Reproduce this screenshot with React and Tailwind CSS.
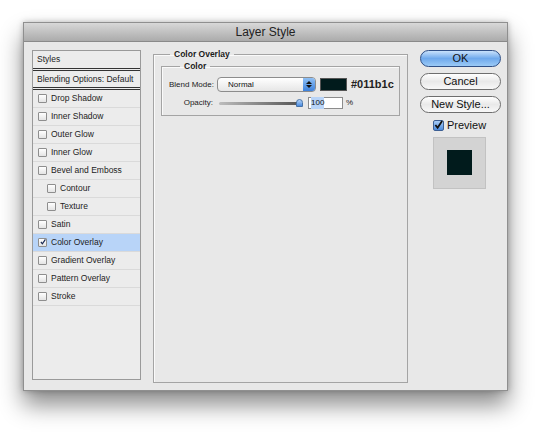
import React from "react";

const font = { fontFamily: '"Liberation Sans", Arial, sans-serif' };

function Box({ checked, indent }) {
  return (
    <span
      className={`inline-flex items-center justify-center w-[9px] h-[9px] border border-[#8e8e8e] bg-gradient-to-b from-white to-[#e4e4e4] rounded-[1px] ${indent ? "ml-[14px]" : "ml-[5px]"} mr-[4px] shrink-0`}
    >
      {checked && (
        <svg width="10" height="10" viewBox="0 0 10 10" className="-mt-[2px] ml-[1px]">
          <path d="M1.5 5 L4 8 L9 0.5" stroke="#1a2a55" strokeWidth="2" fill="none" />
        </svg>
      )}
    </span>
  );
}

const rows = [
  ["Drop Shadow"],
  ["Inner Shadow"],
  ["Outer Glow"],
  ["Inner Glow"],
  ["Bevel and Emboss"],
  ["Contour", true],
  ["Texture", true],
  ["Satin"],
  ["Color Overlay", false, true],
  ["Gradient Overlay"],
  ["Pattern Overlay"],
  ["Stroke"],
];

export default function App() {
  return (
    <div className="w-[550px] h-[436px] bg-white pl-[23px] pt-[22px]" style={font}>
      <div className="w-[485px] h-[369px] flex flex-col border border-[#8f8f8f] bg-[#e8e8e8] shadow-[0_14px_22px_rgba(0,0,0,0.45),0_0_6px_rgba(0,0,0,0.25)]">
        <div className="h-[19px] shrink-0 bg-gradient-to-b from-[#d8d8d8] to-[#ababab] border-b border-[#8a8a8a] flex items-center justify-center text-[12px] text-[#222]">
          Layer Style
        </div>
        <div className="flex flex-1 pl-[8px] pt-[8px]">
          {/* left list */}
          <div className="w-[109px] h-[330px] border border-[#9a9a9a] bg-[#ececec] flex flex-col text-[8.5px] text-[#1c1c1c]">
            <div className="h-[20px] flex items-center pl-[4px] border-b-[3px] border-double border-[#333]">Styles</div>
            <div className="h-[19px] flex items-center pl-[4px] border-b-[3px] border-double border-[#333]">Blending Options: Default</div>
            {rows.map(([label, indent, sel]) => (
              <div
                key={label}
                className={`h-[18px] flex items-center border-b border-[#dadada] ${sel ? "bg-[#b8d4f8]" : ""}`}
              >
                <Box indent={indent} checked={sel} />
                {label}
              </div>
            ))}
          </div>

          {/* main */}
          <div className="ml-[12px] w-[255px] h-[334px]">
            <fieldset className="h-full border border-[#a4a4a4] shadow-[inset_1px_1px_0_#fafafa] px-[7px] pb-0 -mt-[1px]">
              <legend className="ml-[9px] px-[4px] text-[8.5px] font-bold text-[#1c1c1c] leading-[10px]">Color Overlay</legend>
              <fieldset className="mt-[2px] h-[55px] border border-[#a4a4a4] shadow-[inset_1px_1px_0_#fafafa] pl-[7px]">
                <legend className="ml-[11px] px-[4px] text-[8.5px] font-bold text-[#1c1c1c] leading-[10px]">Color</legend>
                <div className="flex items-center mt-[6px] h-[15px]">
                  <span className="text-[8px] text-[#222] w-[48px]">Blend Mode:</span>
                  <div className="w-[99px] h-[15px] rounded-[4px] border border-[#8c8c8c] bg-gradient-to-b from-white to-[#e6e6e6] flex items-center text-[8px] text-[#111] pl-[10px] relative overflow-hidden">
                    Normal
                    <div className="absolute right-0 top-0 bottom-0 w-[12px] bg-gradient-to-b from-[#8fc0f5] to-[#3d82dc] flex flex-col items-center justify-center gap-[1px]">
                      <svg width="6" height="3" viewBox="0 0 6 3"><path d="M0 3 L3 0 L6 3Z" fill="#111" /></svg>
                      <svg width="6" height="3" viewBox="0 0 6 3"><path d="M0 0 L3 3 L6 0Z" fill="#111" /></svg>
                    </div>
                  </div>
                  <div className="ml-[4px] w-[27px] h-[13px] bg-[#011b1c] border border-[#555]" />
                  <span className="ml-[4px] text-[11px] font-bold text-[#222]">#011b1c</span>
                </div>
                <div className="flex items-center mt-[5px] h-[12px]">
                  <span className="text-[8px] text-[#222] w-[44px] text-right">Opacity:</span>
                  <div className="ml-[6px] relative w-[84px] h-[10px] flex items-center">
                    <div className="w-[80px] h-[3px] bg-gradient-to-r from-[#bdbdbd] to-[#555] rounded-full" />
                    <div className="absolute right-0 top-[1px] w-[7px] h-[8px] rounded-t-full bg-gradient-to-b from-[#b3d3f8] to-[#4a8ade] border border-[#4673a8]" />
                  </div>
                  <div className="ml-[5px] w-[35px] h-[12px] bg-white border border-[#8c8c8c] text-[8px] flex items-center pl-[2px] text-[#111]">
                    <span className="bg-[#b8d4f8]">100</span>
                  </div>
                  <span className="ml-[3px] text-[8px] text-[#222]">%</span>
                </div>
              </fieldset>
            </fieldset>
          </div>

          {/* buttons */}
          <div className="ml-[12px] w-[81px] flex flex-col items-center">
            <button className="w-[81px] h-[17px] rounded-full border border-[#2f4f86] bg-gradient-to-b from-[#c9e2fb] via-[#6fa9ec] to-[#9bcaf6] text-[11px] text-[#111] leading-none">OK</button>
            <button className="mt-[6px] w-[81px] h-[17px] rounded-full border border-[#6e6e6e] bg-gradient-to-b from-white via-[#e9e9e9] to-[#f8f8f8] text-[11px] text-[#111] leading-none">Cancel</button>
            <button className="mt-[6px] w-[81px] h-[17px] rounded-full border border-[#6e6e6e] bg-gradient-to-b from-white via-[#e9e9e9] to-[#f8f8f8] text-[11px] text-[#111] leading-none">New Style...</button>
            <div className="mt-[4px] flex items-center self-start ml-[13px] text-[11px] text-[#111]">
              <span className="w-[11px] h-[11px] rounded-[2px] border border-[#3c5f94] bg-gradient-to-b from-[#a9cdf6] to-[#4a8ade] flex items-center justify-center mr-[3px]">
                <svg width="10" height="10" viewBox="0 0 10 10" className="-mt-[1px]">
                  <path d="M1.5 5 L4 8 L9 0.5" stroke="#111" strokeWidth="2" fill="none" />
                </svg>
              </span>
              Preview
            </div>
            <div className="mt-[3px] self-start ml-[13px] w-[53px] h-[52px] bg-[#d3d3d3] border border-[#c2c2c2] flex items-center justify-center">
              <div className="w-[25px] h-[25px] bg-[#011b1c]" />
            </div>
          </div>
        </div>
      </div>
    </div>
  );
}
